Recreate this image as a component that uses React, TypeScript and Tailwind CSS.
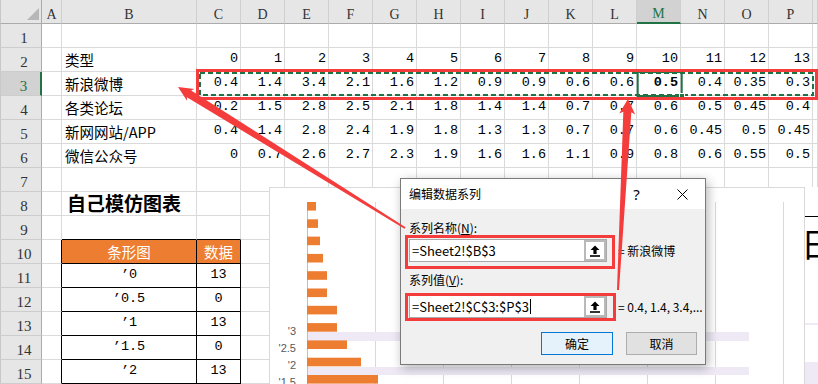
import React from 'react';

const COLS = ['A', 'B', 'C', 'D', 'E', 'F', 'G', 'H', 'I', 'J', 'K', 'L', 'M', 'N', 'O', 'P', 'Q'];

const rowsData: Record<number, string[]> = {
  2: ['类型', '0', '1', '2', '3', '4', '5', '6', '7', '8', '9', '10', '11', '12', '13'],
  3: ['新浪微博', '0.4', '1.4', '3.4', '2.1', '1.6', '1.2', '0.9', '0.9', '0.6', '0.6', '0.5', '0.4', '0.35', '0.3'],
  4: ['各类论坛', '0.2', '1.5', '2.8', '2.5', '2.1', '1.8', '1.4', '1.4', '0.7', '0.7', '0.6', '0.5', '0.45', '0.4'],
  5: ['新网网站/APP', '0.4', '1.4', '2.8', '2.4', '1.9', '1.8', '1.3', '1.3', '0.7', '0.7', '0.6', '0.45', '0.5', '0.45'],
  6: ['微信公众号', '0', '0.7', '2.6', '2.7', '2.3', '1.9', '1.6', '1.6', '1.1', '0.9', '0.8', '0.6', '0.55', '0.5'],
};

const tableRows: Record<number, [string, string]> = {
  11: ['’0', '13'],
  12: ['’0.5', '0'],
  13: ['’1', '13'],
  14: ['’1.5', '0'],
  15: ['’2', '13'],
};

function RowHeader({ r }: { r: number }) {
  if (r === 0) {
    return (
      <div className="relative bg-[#e6e6e6] border-l border-r border-b border-l-[#c8c8c8] border-r-[#ababab] border-b-[#ababab]">
        <svg className="absolute right-[1px] bottom-[3px]" width="13" height="12">
          <polygon points="12,0 12,12 0,12" fill="#b7b7b7" />
        </svg>
      </div>
    );
  }
  if (r === 3) {
    return (
      <div className="flex items-center justify-center pt-[6px] pl-[6px] bg-[#d2d2d2] text-[#217346] border-l border-r-2 border-b border-l-[#c8c8c8] border-r-[#217346] border-b-[#cdcdcd] font-['Liberation_Serif',serif] text-[15px]">
        {r}
      </div>
    );
  }
  return (
    <div className="flex items-center justify-center pt-[6px] pl-[6px] bg-[#e6e6e6] text-[#333] border-l border-r border-b border-l-[#c8c8c8] border-r-[#ababab] border-b-[#cdcdcd] font-['Liberation_Serif',serif] text-[15px]">
      {r}
    </div>
  );
}

function Cell({ r, c }: { r: number; c: number }) {
  if (r === 0) {
    if (c === 12) {
      return (
        <div className="flex items-center justify-center pt-[5px] bg-[#d2d2d2] text-[#217346] border-r border-b-2 border-r-[#cfcfcf] border-b-[#217346] font-['Liberation_Serif',serif] text-[14px] overflow-hidden">
          {COLS[c]}
        </div>
      );
    }
    return (
      <div className="flex items-center justify-center pt-[5px] bg-[#e6e6e6] text-[#333] border-r border-b border-r-[#cfcfcf] border-b-[#ababab] font-['Liberation_Serif',serif] text-[14px] overflow-hidden">
        {c === 16 ? '' : COLS[c]}
      </div>
    );
  }

  const rightBlack = r >= 10 && r <= 15 && c <= 2;
  const bottomBlack = r >= 9 && r <= 15 && (c === 1 || c === 2);
  const orange = r === 10 && (c === 1 || c === 2);
  const base = `relative border-r border-b ${rightBlack ? 'border-r-black' : 'border-r-[#dadada]'} ${bottomBlack ? 'border-b-black' : 'border-b-[#dadada]'} ${orange ? 'bg-[#ed7d31] text-white' : 'bg-white text-black'} flex items-center whitespace-nowrap min-w-0`;

  let content: React.ReactNode = null;
  let align = '';

  const rd = rowsData[r];
  if (rd && c >= 1 && c <= 15) {
    if (c === 1) {
      align = "justify-start pl-[3px] font-['Noto_Sans_CJK_SC',sans-serif] text-[14.5px]";
    } else {
      align = `justify-end pr-[2px] font-['Liberation_Mono',monospace] text-[13.5px] ${r === 3 && c === 12 ? 'font-bold' : ''}`;
    }
    content = rd[c - 1];
  } else if (r === 8 && c === 1) {
    align = "justify-start pl-[5px] font-['Noto_Sans_CJK_SC',sans-serif] text-[19px] font-bold overflow-visible";
    content = '自己模仿图表';
  } else if (r === 10 && c === 1) {
    align = "justify-center font-['Noto_Sans_CJK_SC',sans-serif] text-[14.5px]";
    content = '条形图';
  } else if (r === 10 && c === 2) {
    align = "justify-center font-['Noto_Sans_CJK_SC',sans-serif] text-[14.5px]";
    content = '数据';
  } else if (tableRows[r] && (c === 1 || c === 2)) {
    align = "justify-center font-['Liberation_Mono',monospace] text-[13.5px]";
    content = tableRows[r][c - 1];
  }

  return <div className={`${base} ${align}`}>{content}</div>;
}

function Chart() {
  const widths = [9, 11, 13, 16, 20, 20, 30, 30, 40, 54, 71];
  const labels: [string, number][] = [
    ["'3", 331],
    ["'2.5", 348],
    ["'2", 365],
    ["'1.5", 382],
  ];
  return (
    <svg className="absolute left-[269px] top-[187px]" width={536} height={197} viewBox="269 187 536 197">
      <rect x={269.5} y={187.5} width={535} height={210} fill="#ffffff" stroke="#d9d9d9" />
      {[375, 443, 511, 579, 647, 715, 783].map((x) => (
        <line key={x} x1={x + 0.5} y1={202} x2={x + 0.5} y2={390} stroke="#d9d9d9" />
      ))}
      <rect x={307} y={332} width={442} height={9} fill="#eee9f5" />
      <rect x={307} y={367} width={442} height={8} fill="#eee9f5" />
      <line x1={307.5} y1={202} x2={307.5} y2={390} stroke="#bfbfbf" />
      {widths.map((w, i) => (
        <rect key={i} x={307} y={202 + i * 17.3} width={w} height={8.6} fill="#ed7d31" />
      ))}
      {labels.map(([t, y]) => (
        <text
          key={t}
          x={296}
          y={y + 4}
          textAnchor="end"
          fontSize={11}
          fill="#595959"
          fontFamily="'Liberation Sans', sans-serif"
        >
          {t}
        </text>
      ))}
    </svg>
  );
}

function RightPanel() {
  return (
    <div className="absolute left-[805px] top-[187px] w-[13px] h-[197px] bg-white overflow-hidden">
      <div className="absolute left-0 top-[29px] w-full h-px bg-black" />
      <div className="absolute left-[-4px] top-[40px] text-[33px] leading-none font-['Noto_Sans_CJK_SC',sans-serif] text-black">
        日
      </div>
      <div className="absolute left-0 top-[136px] w-full h-[2px] bg-[#eee9f5]" />
      <div className="absolute left-0 top-[175px] w-full h-[22px] bg-[#eee9f5]" />
    </div>
  );
}

function RefButton() {
  return (
    <div className="w-[22px] h-full border-2 border-[#b9b9b9] bg-white flex items-center justify-center">
      <svg width="10" height="12" viewBox="0 0 10 12">
        <path d="M5 0.5 L9.5 5 H6.6 V9 H3.4 V5 H0.5 Z" fill="#000" />
        <rect x="0" y="10.2" width="10" height="1.6" fill="#000" />
      </svg>
    </div>
  );
}

function Dialog() {
  return (
    <div className="absolute left-[400px] top-[178px] w-[306px] h-[187px] border border-[#7a7a7a] bg-[#f0f0f0] shadow-[2px_3px_10px_rgba(0,0,0,0.3)] flex flex-col font-['Noto_Sans_CJK_SC',sans-serif] text-[12px] text-black">
      <div className="h-[30px] bg-white flex items-center">
        <div className="flex-1 pl-[8px]">编辑数据系列</div>
        <div className="w-[45px] h-full flex items-center justify-center text-[15px] font-['Noto_Sans',sans-serif]">?</div>
        <div className="w-[46px] h-full flex items-center justify-center">
          <svg width="11" height="11" viewBox="0 0 11 11">
            <path d="M0.5 0.5 L10.5 10.5 M10.5 0.5 L0.5 10.5" stroke="#000" strokeWidth="1" />
          </svg>
        </div>
      </div>
      <div className="flex-1 flex flex-col pl-[8px] pt-[11px]">
        <div className="h-[16px] leading-[16px]">
          系列名称(<span className="underline">N</span>):
        </div>
        <div className="mt-[3px] flex items-center">
          <div className="w-[198px] h-[23px] flex border border-[#a8a8a8] bg-white">
            <div className="flex-1 pl-[2px] flex items-center text-[13px]">=Sheet2!$B$3</div>
            <RefButton />
          </div>
          <span className="ml-[11px] whitespace-nowrap">= 新浪微博</span>
        </div>
        <div className="mt-[10px] h-[16px] leading-[16px]">
          系列值(<span className="underline">V</span>):
        </div>
        <div className="mt-[7px] flex items-center">
          <div className="w-[198px] h-[23px] flex border border-[#a8a8a8] bg-white">
            <div className="flex-1 pl-[2px] flex items-center text-[13px]">
              =Sheet2!$C$3:$P$3
              <span className="ml-[1px] w-px h-[15px] bg-black" />
            </div>
            <RefButton />
          </div>
          <span className="ml-[11px] whitespace-nowrap">= 0.4, 1.4, 3.4,...</span>
        </div>
        <div className="mt-[14px] flex justify-end gap-[13px] pr-[8px]">
          <div className="w-[72px] h-[23px] border border-[#0078d7] bg-[#e5f1fb] flex items-center justify-center">确定</div>
          <div className="w-[71px] h-[23px] border border-[#adadad] bg-[#e1e1e1] flex items-center justify-center">取消</div>
        </div>
      </div>
    </div>
  );
}

function Annotations() {
  const red = '#f53c3c';
  const arrow1 = [
    [178, 87],
    [194.45, 88.97],
    [191.16, 90.46],
    [405.53, 227.15],
    [404.47, 228.85],
    [186.94, 97.26],
    [187.05, 100.87],
  ];
  const arrow2 = [
    [628, 99],
    [635.2, 114.4],
    [631.31, 112.19],
    [619, 290.05],
    [617, 289.95],
    [623.33, 111.77],
    [619.2, 113.6],
  ];
  const pts = (a: number[][]) => a.map((p) => p.join(',')).join(' ');
  return (
    <svg className="absolute left-0 top-0 pointer-events-none" width={818} height={384}>
      <rect x={200} y={73} width={613} height={22} fill="none" stroke="#1f7246" strokeWidth={2} strokeDasharray="5 3" />
      <rect x={637.7} y={72} width={44} height={24} fill="none" stroke="#217346" strokeWidth={2} />
      <rect x={679.5} y={93.5} width={5} height={5} fill="#217346" stroke="#ffffff" strokeWidth={1} />
      <rect x={197.5} y={70.5} width={619} height={28} fill="none" stroke={red} strokeWidth={3} />
      <rect x={406.5} y={236.5} width={207} height={31} fill="none" stroke={red} strokeWidth={3} />
      <rect x={406.5} y={294.5} width={208} height={25} fill="none" stroke={red} strokeWidth={3} />
      <polygon points={pts(arrow1)} fill={red} />
      <polygon points={pts(arrow2)} fill={red} />
    </svg>
  );
}

export default function App() {
  const rows = Array.from({ length: 16 }, (_, i) => i);
  return (
    <div className="relative w-[818px] h-[384px] overflow-hidden bg-white">
      <div className="grid grid-cols-[42px_20px_135px_repeat(14,44px)_5px] grid-rows-[repeat(16,24px)]">
        {rows.map((r) => (
          <React.Fragment key={r}>
            <RowHeader r={r} />
            {COLS.map((_, c) => (
              <Cell key={c} r={r} c={c} />
            ))}
          </React.Fragment>
        ))}
      </div>
      <Chart />
      <RightPanel />
      <Dialog />
      <Annotations />
    </div>
  );
}
